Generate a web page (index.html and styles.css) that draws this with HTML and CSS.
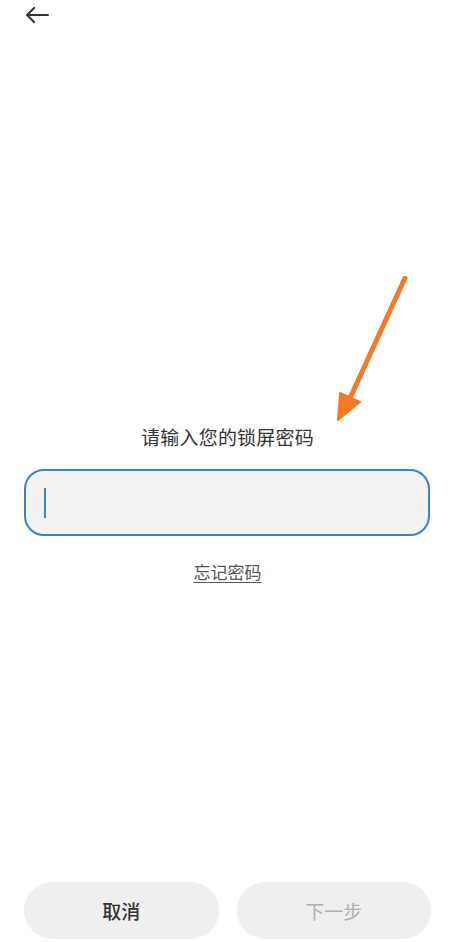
FILE: index.html
```html
<!DOCTYPE html>
<html lang="zh">
<head>
<meta charset="utf-8">
<link rel="stylesheet" href="styles.css">
</head>
<body>
<div class="page">
  <header class="topbar">
    <svg class="back" width="24" height="16" viewBox="0 0 24 16">
      <path d="M23 8H2M9 1L2 8l7 7" fill="none" stroke="#333" stroke-width="2" stroke-linecap="round" stroke-linejoin="round"/>
    </svg>
  </header>
  <main class="content">
    <div class="title">请输入您的锁屏密码</div>
    <div class="input"><span class="cursor"></span></div>
    <div class="forgot">忘记密码</div>
  </main>
  <footer class="actions">
    <button class="btn">取消</button>
    <button class="btn disabled">下一步</button>
  </footer>
  <svg class="annot" width="80" height="150" viewBox="0 0 80 150">
    <path d="M70 2 L16 120" stroke="#f47a2a" stroke-width="5" stroke-linecap="round"/>
    <path d="M5 117 L3 144 L25 126 Z" fill="#f47a2a" stroke="#f47a2a" stroke-width="2" stroke-linejoin="round"/>
  </svg>
</div>
</body>
</html>
```
FILE: styles.css
```css
html, body {
  margin: 0;
  padding: 0;
  background: #ffffff;
}
body {
  font-family: "Noto Sans CJK SC", "Noto Sans", sans-serif;
  color: #333;
}
.page {
  position: relative;
  width: 455px;
  height: 942px;
  display: flex;
  flex-direction: column;
  overflow: hidden;
}
.topbar {
  height: 30px;
  padding-left: 25px;
  padding-top: 7px;
  box-sizing: border-box;
}
.back { display: block; }
.content {
  flex: 1;
  display: flex;
  flex-direction: column;
  align-items: center;
  padding-top: 393px;
}
.title {
  font-size: 19px;
  line-height: 27px;
  color: #333;
  letter-spacing: 0.2px;
}
.input {
  margin-top: 19px;
  width: 406px;
  height: 67px;
  box-sizing: border-box;
  border: 2.5px solid #3a82c4;
  border-radius: 20px;
  background: #f3f3f3;
  display: flex;
  align-items: center;
  padding-left: 18px;
  align-self: flex-start;
  margin-left: 24px;
}
.cursor {
  display: block;
  width: 2px;
  height: 30px;
  background: #3a82c4;
}
.forgot {
  margin-top: 24px;
  font-size: 17px;
  line-height: 24px;
  color: #555;
  text-decoration: underline;
  text-underline-offset: 3px;
  text-decoration-thickness: 1px;
}
.actions {
  display: flex;
  gap: 18px;
  padding: 0 24px 3px 24px;
}
.btn {
  flex: 1;
  height: 57px;
  border: none;
  border-radius: 29px;
  background: #efefef;
  font-family: "Noto Sans CJK SC", sans-serif;
  font-size: 19px;
  font-weight: 500;
  color: #333;
}
.btn.disabled {
  color: #b0b0b0;
  font-weight: 400;
}
.annot {
  position: absolute;
  left: 335px;
  top: 276px;
}
```
